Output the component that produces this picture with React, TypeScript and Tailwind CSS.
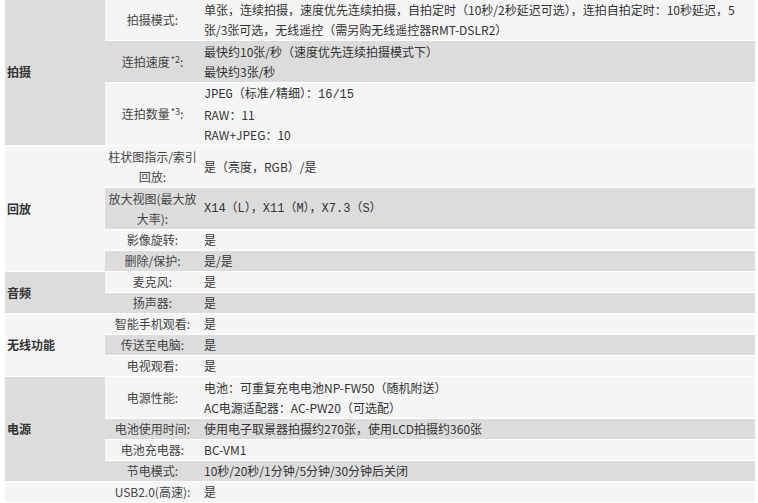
import React from 'react';

type SpecRow = {
  label: React.ReactNode[];
  lines: React.ReactNode[];
  h: string;
  mono?: boolean;
};

type Section = {
  title: string;
  dark: boolean;
  span: string;
  rows: SpecRow[];
};

const monoFont = { fontFamily: '"Liberation Mono", "Noto Sans CJK SC", monospace' };

const Sup = ({ n }: { n: string }) => (
  <sup className="text-[9px] relative -top-[4px] ml-px">{n}</sup>
);

const sections: Section[] = [
  {
    title: '拍摄',
    dark: true,
    span: 'row-span-3',
    rows: [
      {
        label: ['拍摄模式:'],
        lines: [
          '单张，连续拍摄，速度优先连续拍摄，自拍定时（10秒/2秒延迟可选），连拍自拍定时：10秒延迟，5',
          '张/3张可选，无线遥控（需另购无线遥控器RMT-DSLR2）',
        ],
        h: 'h-[41px]',
      },
      {
        label: [<>连拍速度<Sup n="*2" />:</>],
        lines: ['最快约10张/秒（速度优先连续拍摄模式下）', '最快约3张/秒'],
        h: 'h-[41px]',
      },
      {
        label: [<>连拍数量<Sup n="*3" />:</>],
        lines: [
          <span style={monoFont}>JPEG（标准/精细）：16/15</span>,
          'RAW：11',
          'RAW+JPEG：10',
        ],
        h: 'h-[62px]',
      },
    ],
  },
  {
    title: '回放',
    dark: false,
    span: 'row-span-4',
    rows: [
      { label: ['柱状图指示/索引', '回放:'], lines: ['是（亮度，RGB）/是'], h: 'h-[41px]' },
      {
        label: ['放大视图(最大放', '大率):'],
        lines: ['X14（L），X11（M），X7.3（S）'],
        h: 'h-[41px]',
        mono: true,
      },
      { label: ['影像旋转:'], lines: ['是'], h: 'h-[20px]' },
      { label: ['删除/保护:'], lines: ['是/是'], h: 'h-[20px]' },
    ],
  },
  {
    title: '音频',
    dark: true,
    span: 'row-span-2',
    rows: [
      { label: ['麦克风:'], lines: ['是'], h: 'h-[20px]' },
      { label: ['扬声器:'], lines: ['是'], h: 'h-[20px]' },
    ],
  },
  {
    title: '无线功能',
    dark: false,
    span: 'row-span-3',
    rows: [
      { label: ['智能手机观看:'], lines: ['是'], h: 'h-[20px]' },
      { label: ['传送至电脑:'], lines: ['是'], h: 'h-[20px]' },
      { label: ['电视观看:'], lines: ['是'], h: 'h-[20px]' },
    ],
  },
  {
    title: '电源',
    dark: true,
    span: 'row-span-4',
    rows: [
      {
        label: ['电源性能:'],
        lines: ['电池：可重复充电电池NP-FW50（随机附送）', 'AC电源适配器：AC-PW20（可选配）'],
        h: 'h-[41px]',
      },
      { label: ['电池使用时间:'], lines: ['使用电子取景器拍摄约270张，使用LCD拍摄约360张'], h: 'h-[20px]' },
      { label: ['电池充电器:'], lines: ['BC-VM1'], h: 'h-[20px]' },
      { label: ['节电模式:'], lines: ['10秒/20秒/1分钟/5分钟/30分钟后关闭'], h: 'h-[20px]' },
    ],
  },
  {
    title: '',
    dark: false,
    span: 'row-span-1',
    rows: [{ label: ['USB2.0(高速):'], lines: ['是'], h: 'h-[20px]' }],
  },
];

export default function App() {
  return (
    <div
      className="w-[758px] h-[503px] overflow-hidden bg-white text-[12px] text-[#333]"
      style={{ fontFamily: '"Noto Sans CJK SC", "Liberation Sans", sans-serif' }}
    >
      <div className="grid grid-cols-[100px_95px_1fr] gap-y-px w-[750px] ml-[5px] -mt-px">
        {sections.map((sec, si) => (
          <React.Fragment key={si}>
            <div
              className={`${sec.span} flex items-center pl-[2px] font-bold text-[12px] ${
                sec.dark ? 'bg-[#dcdcdc]' : 'bg-[#f5f5f5]'
              }`}
            >
              {sec.title}
            </div>
            {sec.rows.map((row, ri) => {
              const bg = ri % 2 === 1 ? 'bg-[#dcdcdc]' : 'bg-[#f5f5f5]';
              return (
                <React.Fragment key={ri}>
                  <div className={`${row.h} ${bg} flex flex-col justify-center items-center text-center leading-[20px] text-[#444]`}>
                    {row.label.map((l, li) => (
                      <div key={li} className="whitespace-nowrap">{l}</div>
                    ))}
                  </div>
                  <div
                    className={`${row.h} ${bg} flex flex-col justify-center pl-[4px] leading-[20px]`}
                    style={row.mono ? monoFont : undefined}
                  >
                    {row.lines.map((l, li) => (
                      <div key={li} className="whitespace-nowrap">{l}</div>
                    ))}
                  </div>
                </React.Fragment>
              );
            })}
          </React.Fragment>
        ))}
      </div>
    </div>
  );
}
